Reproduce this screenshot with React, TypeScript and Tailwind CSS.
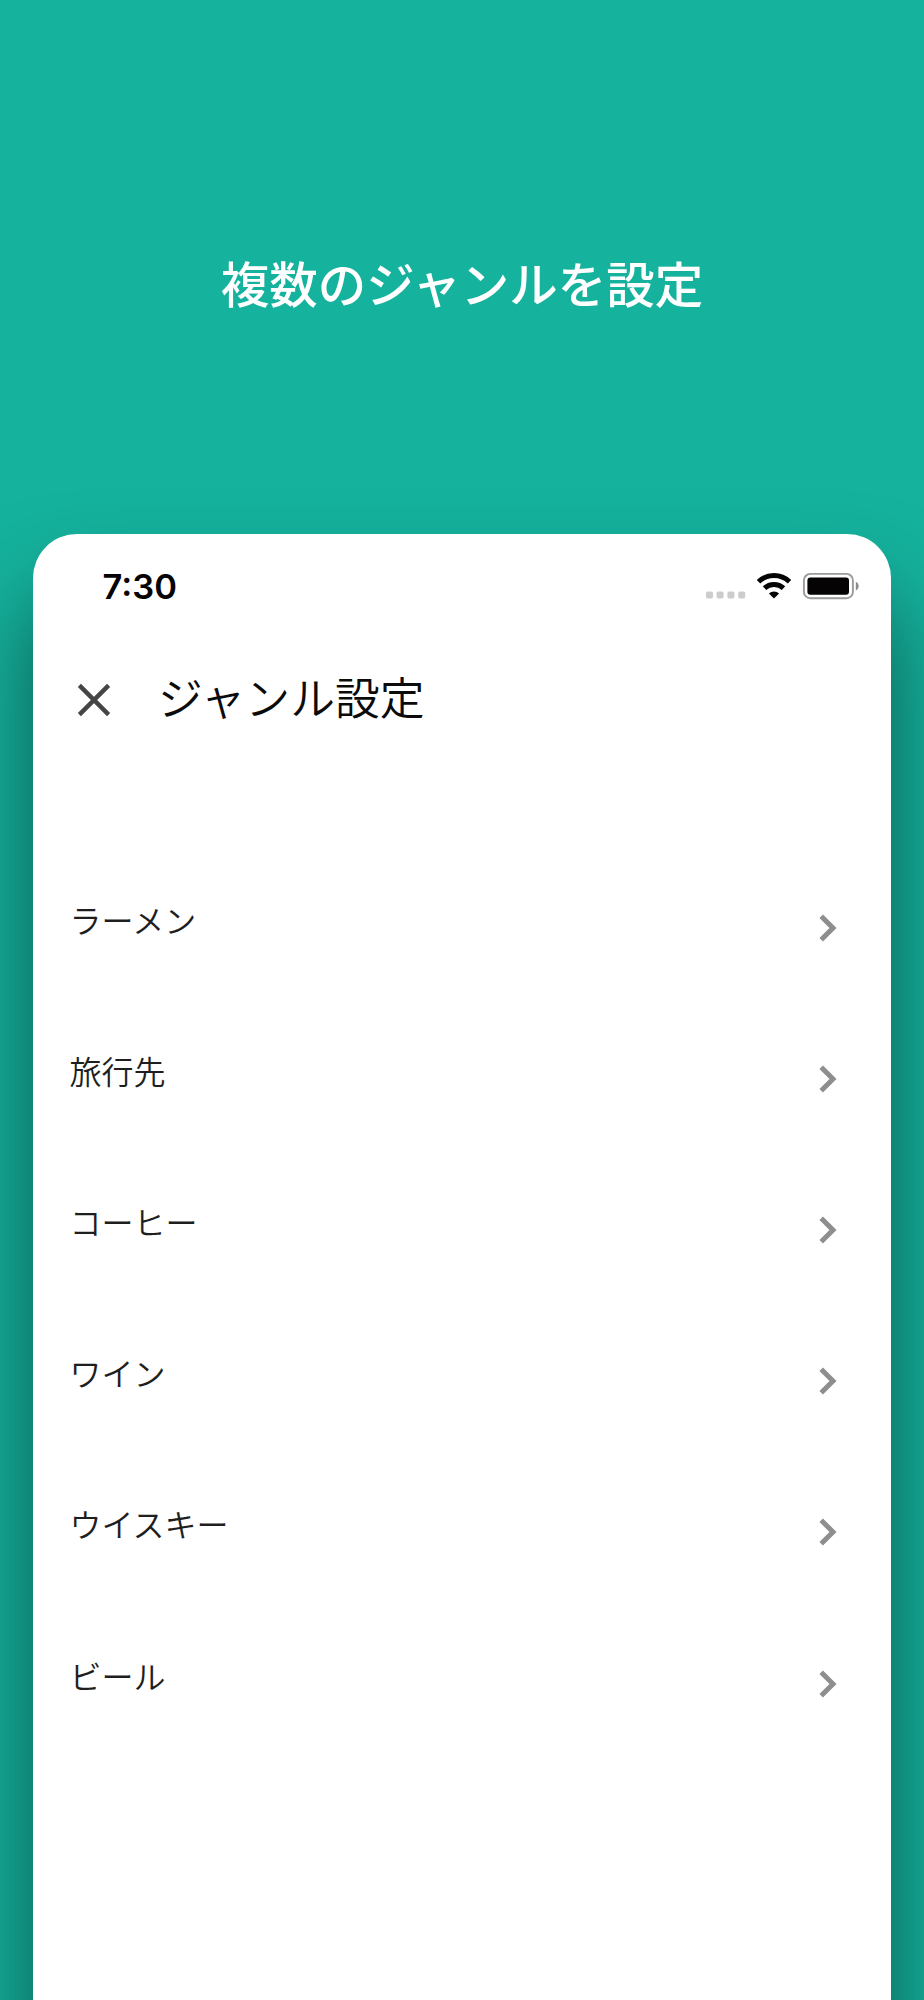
import React from 'react';

const genres = ['ラーメン', '旅行先', 'コーヒー', 'ワイン', 'ウイスキー', 'ビール'];

const StatusIcons: React.FC = () => (
  <svg className="w-[156px] h-[28px]" viewBox="0 0 156 28" fill="none">
    <g fill="#cccccc">
      <rect x="0" y="19.5" width="7" height="7" rx="1.8" />
      <rect x="10.6" y="19.5" width="7" height="7" rx="1.8" />
      <rect x="21.4" y="19.5" width="7" height="7" rx="1.8" />
      <rect x="32.2" y="19.5" width="7" height="7" rx="1.8" />
    </g>
    <g stroke="#050303" strokeWidth="5">
      <path d="M52.5 9.8a22.5 22.5 0 0 1 31 0" />
      <path d="M58.5 16.1a14 14 0 0 1 19 0" />
    </g>
    <path d="M68 26.6l-5.1-5.1a7.4 7.4 0 0 1 10.2 0z" fill="#050303" />
    <rect x="97.9" y="1.9" width="49" height="24.4" rx="6.4" stroke="#9b9b9b" strokeWidth="1.9" />
    <rect x="101.4" y="5.4" width="41.6" height="17.4" rx="3" fill="#050303" />
    <path d="M149.8 9.8c3.8 1.4 3.8 7.2 0 8.6z" fill="#8c8c8c" />
  </svg>
);

const GenreRow: React.FC<{ name: string }> = ({ name }) => (
  <li className="flex items-center justify-between h-[151.2px] pl-[36.5px] pr-[53px]">
    <span className="text-[32px] leading-[48px] font-[350] text-[#1e1e1e] mb-[18px]">{name}</span>
    <svg className="w-[20px] h-[30px]" viewBox="0 0 20 30" fill="none" stroke="#8e8e90" strokeWidth="5">
      <path d="M3.2 3.2L15 15 3.2 26.8" />
    </svg>
  </li>
);

const App: React.FC = () => {
  return (
    <div className="h-[2000px] overflow-hidden bg-[#15b29d] px-[33px] font-['Noto_Sans_CJK_JP',sans-serif]">
      <h1 className="h-[533.6px] pt-[246px] text-center text-[48.5px] leading-[72px] font-medium text-white">
        複数のジャンルを設定
      </h1>
      <main className="h-[1520px] rounded-t-[44px] bg-white shadow-[0_62px_90px_rgba(0,0,0,0.5)]">
        <div className="flex items-start justify-between pl-[69.5px] pr-[29px] pt-[33px] h-[101px]">
          <span className="font-['Inter'] text-[34.5px] leading-[40px] font-semibold text-[#050303]">7:30</span>
          <div className="pt-[5px]">
            <StatusIcons />
          </div>
        </div>
        <header className="flex items-center h-[130px] pl-[44px]">
          <svg className="w-[34px] h-[34px]" viewBox="0 0 34 34" stroke="#454545" strokeWidth="4.4">
            <path d="M2.4 2.4L31.6 31.6M31.6 2.4L2.4 31.6" />
          </svg>
          <h2 className="ml-[47px] mb-[8px] text-[44.8px] leading-[66px] font-[350] text-[#0b0b0b]">ジャンル設定</h2>
        </header>
        <ul className="mt-[87.4px]">
          {genres.map((name) => (
            <GenreRow key={name} name={name} />
          ))}
        </ul>
      </main>
    </div>
  );
};

export default App;
